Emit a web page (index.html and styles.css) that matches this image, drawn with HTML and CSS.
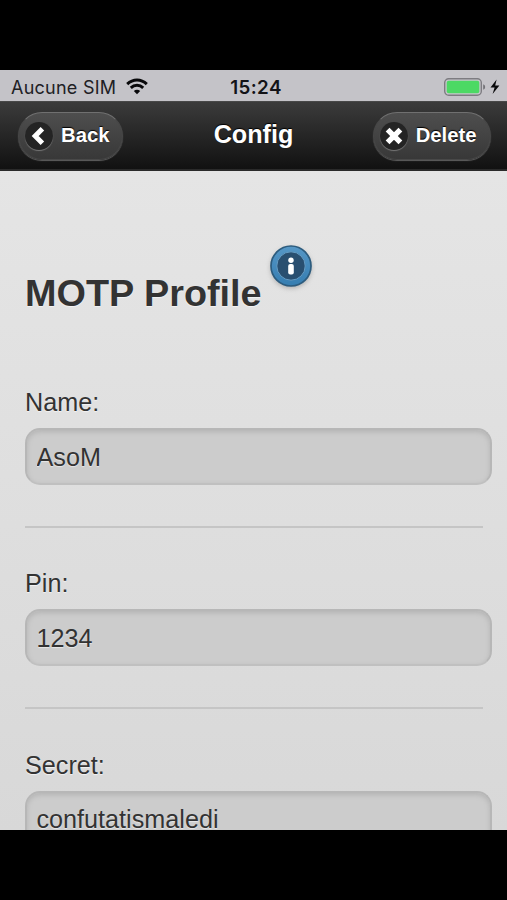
FILE: index.html
```html
<!DOCTYPE html>
<html lang="fr">
<head>
<meta charset="utf-8">
<meta name="viewport" content="width=device-width, initial-scale=1">
<title>Config</title>
<link rel="stylesheet" href="styles.css">
</head>
<body>
<main class="screen">
  <div class="status">
    <div class="carrier"><span class="carrier-name">Aucune SIM</span>
      <svg class="wifi" width="22" height="17" viewBox="0 0 22 17" fill="none" stroke="#08080a" stroke-width="3"><path d="M1.2 6.2C7 .7 15 .7 20.8 6.2M4.8 9.8c3.6-3.3 8.8-3.3 12.4 0"/><path d="M7.8 13c1.8-1.7 4.6-1.7 6.4 0L11 16.2z" fill="#08080a" stroke="none"/></svg>
    </div>
    <time class="clock">15:24</time>
    <div class="power">
      <svg width="58" height="20" viewBox="0 0 58 20"><rect x="1.7" y="1.7" width="36.6" height="16.6" rx="4" fill="#c8c7cc" stroke="#7d7c81" stroke-width="1.4"/><rect x="3.7" y="3.7" width="32.6" height="12.6" rx="2" fill="#4cd964"/><path d="M40.2 7.2q2 .5 2 2.8t-2 2.8z" fill="#747378"/><path d="M53.6 2.5 47.5 10.5h4.1l-2 6.5 6.8-8.6h-4.2z" fill="#08080a"/></svg>
    </div>
  </div>
  <header class="bar">
    <a class="button back"><span class="disc"><svg width="28" height="28" viewBox="1 1 28 28" fill="none" stroke="#fff" stroke-width="5"><path d="M18.4 7.8 11.2 15l7.2 7.2"/></svg></span>Back</a>
    <h1 class="title">Config</h1>
    <a class="button delete"><span class="disc"><svg width="28" height="28" viewBox="1 1 28 28" fill="none" stroke="#fff" stroke-width="5.4"><path d="m8.6 8.6 12.8 12.8M21.4 8.6 8.6 21.4"/></svg></span>Delete</a>
  </header>
  <section class="content">
    <div class="heading">
      <h2>MOTP Profile</h2>
      <svg class="info" width="48" height="48" viewBox="0 0 48 48">
        <defs><linearGradient id="ring" x2="0" y2="1"><stop stop-color="#5697c6"/><stop offset="1" stop-color="#357db1"/></linearGradient></defs>
        <circle cx="24" cy="23" r="20" fill="url(#ring)" stroke="#2d5c7e" stroke-width="1.7"/>
        <circle cx="24" cy="23" r="14.2" fill="#294f70" stroke="#659bc2" stroke-width="1"/>
        <circle cx="24" cy="17.2" r="2.7" fill="#fff"/><rect x="21.2" y="21" width="5.6" height="10.6" rx="2" fill="#fff"/>
      </svg>
    </div>
    <form>
      <div class="field"><label for="name">Name:</label><input id="name" type="text" value="AsoM"></div>
      <div class="field"><label for="pin">Pin:</label><input id="pin" type="text" value="1234"></div>
      <div class="field"><label for="secret">Secret:</label><input id="secret" type="text" value="confutatismaledi"></div>
    </form>
  </section>
</main>
</body>
</html>
```
FILE: styles.css
```css
* { box-sizing: border-box; }
html, body { margin: 0; height: 900px; overflow: hidden; background: #000; }
body { padding: 70px 0; font-family: "Liberation Sans", Arial, sans-serif; color: #333; }
h1, h2 { margin: 0; }
svg { display: block; flex: none; }

.screen {
  height: 760px;
  overflow: hidden;
  background: linear-gradient(#e5e5e5 100px, #d8d8d8);
}

.status {
  height: 31px;
  padding: 2px 6px 0 11px;
  display: grid;
  grid-template-columns: 1fr auto 1fr;
  align-items: center;
  background: #c4c3c8;
  color: #202024;
  font: 18px/29px Inter, sans-serif;
}
.carrier { display: flex; align-items: center; gap: 10px; white-space: nowrap; }
.carrier-name { padding-top: 1px; letter-spacing: 0.25px; }
.wifi { margin-top: -1px; }
.clock { font-weight: 600; font-size: 18.8px; letter-spacing: 0.4px; padding-top: 1px; color: #131317; }
.power { justify-self: end; }

.bar {
  height: 70px;
  padding: 0 16px 0 18px;
  display: grid;
  grid-template-columns: 1fr auto 1fr;
  align-items: center;
  background: linear-gradient(#3b3b3b, #111);
  border-top: 1px solid #484848;
  border-bottom: 2px solid #2a2a2a;
  color: #fff;
  text-shadow: 0 -1px 1px #000;
}
.title { font-size: 25.2px; line-height: 32px; padding-bottom: 4px; margin-right: 2px; }
.button {
  height: 48px;
  padding: 0 12px 0 6px;
  display: flex;
  align-items: center;
  gap: 8px;
  border: 1px solid #484848;
  border-top-color: #707070;
  border-radius: 24px;
  background: linear-gradient(#4e4e4e, #383838);
  box-shadow: 0 1px 1px #606060;
  font-size: 20.3px;
  font-weight: bold;
}
.back { justify-self: start; }
.delete { justify-self: end; padding-right: 13.5px; }
.disc {
  width: 28px;
  height: 28px;
  border-radius: 50%;
  background: #242424;
  box-shadow: 0 1px 1px #777;
}

.content { padding: 71px 15px 0 25px; text-shadow: 0 1px 1px #f3f3f3; }
.heading { display: flex; align-items: flex-start; }
.heading h2 { font-size: 37.8px; line-height: 44px; padding-top: 29px; }
.info { margin: 1px 0 0 5px; filter: drop-shadow(0 2px 2px #9999); }

form { padding-top: 71px; }
.field { height: 181.4px; }
.field label { display: block; height: 42px; padding-top: 1px; font-size: 25.2px; line-height: 30px; }
.field input {
  display: block;
  width: 100%;
  height: 57px;
  margin: 0;
  padding: 1px 10px 0 9.5px;
  border: 2px solid #b7b7b7;
  border-bottom-color: #c0c0c0;
  border-radius: 15px;
  outline: 0;
  background: #ccc;
  box-shadow: inset 0 2px 5px #b4b4b4;
  color: #333;
  font: 25.2px "Liberation Sans", Arial, sans-serif;
  text-shadow: 0 1px 1px #e8e8e8;
}
.field::after {
  content: "";
  display: block;
  width: calc(100% - 9px);
  height: 2px;
  margin-top: 41px;
  background: #c5c5c5;
}
```
